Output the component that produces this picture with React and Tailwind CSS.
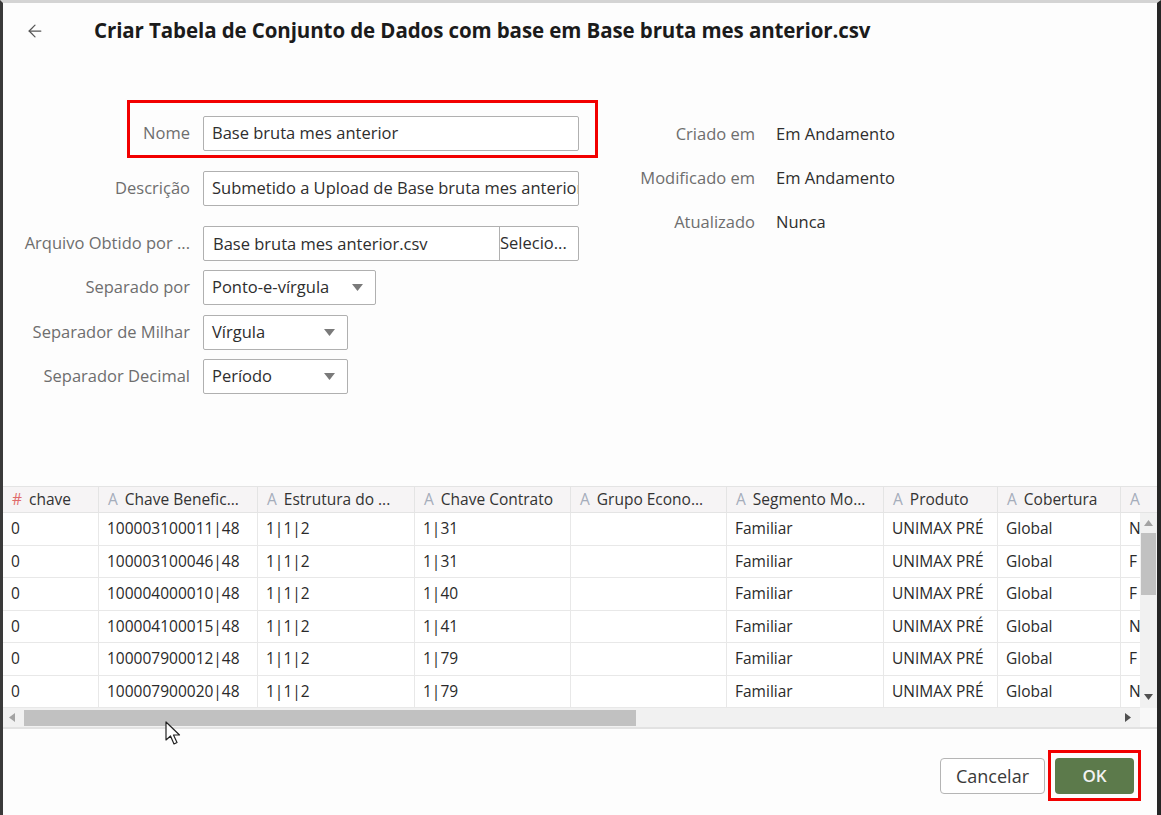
import { ArrowLeft } from 'lucide-react';

const columns = [
  { name: 'chave', type: '#', width: 96 },
  { name: 'Chave Benefic...', type: 'A', width: 159 },
  { name: 'Estrutura do ...', type: 'A', width: 157 },
  { name: 'Chave Contrato', type: 'A', width: 156 },
  { name: 'Grupo Econo...', type: 'A', width: 156 },
  { name: 'Segmento Mo...', type: 'A', width: 157 },
  { name: 'Produto', type: 'A', width: 114 },
  { name: 'Cobertura', type: 'A', width: 123 },
  { name: '', type: 'A', width: 60 },
];

const rows = [
  ['0', '100003100011|48', '1|1|2', '1|31', '', 'Familiar', 'UNIMAX PRÉ', 'Global', 'N'],
  ['0', '100003100046|48', '1|1|2', '1|31', '', 'Familiar', 'UNIMAX PRÉ', 'Global', 'F'],
  ['0', '100004000010|48', '1|1|2', '1|40', '', 'Familiar', 'UNIMAX PRÉ', 'Global', 'F'],
  ['0', '100004100015|48', '1|1|2', '1|41', '', 'Familiar', 'UNIMAX PRÉ', 'Global', 'N'],
  ['0', '100007900012|48', '1|1|2', '1|79', '', 'Familiar', 'UNIMAX PRÉ', 'Global', 'F'],
  ['0', '100007900020|48', '1|1|2', '1|79', '', 'Familiar', 'UNIMAX PRÉ', 'Global', 'N'],
];

function Caret() {
  return (
    <svg width="11" height="7" viewBox="0 0 11 7" className="shrink-0">
      <path d="M0 0 L11 0 L5.5 7 Z" fill="#7a7a7a" />
    </svg>
  );
}

function FormRow({ label, children, className = '' }) {
  return (
    <div className={`flex items-center ${className}`}>
      <div className="w-[187px] shrink-0 text-right text-[16.5px] whitespace-nowrap text-[#6e6e6e]">{label}</div>
      <div className="ml-[13px]">{children}</div>
    </div>
  );
}

function TextBox({ value, width = 'w-[376px]' }) {
  return (
    <div className={`${width} flex h-[35px] items-center overflow-hidden whitespace-nowrap rounded-[2px] border border-[#b0b0b0] bg-white px-[8px] text-[16.5px] text-[#2e2e2e]`}>
      {value}
    </div>
  );
}

function SelectBox({ value, width }) {
  return (
    <div className={`${width} flex h-[35px] items-center justify-between rounded-[2px] border border-[#b0b0b0] bg-white pl-[8px] pr-[12px] text-[16.5px] text-[#2e2e2e]`}>
      <span>{value}</span>
      <Caret />
    </div>
  );
}

function InfoRow({ label, value }) {
  return (
    <div className="flex h-[44px] items-center">
      <div className="w-[155px] text-right text-[16.5px] text-[#6e6e6e]">{label}</div>
      <div className="ml-[21px] text-[16.5px] text-[#2e2e2e]">{value}</div>
    </div>
  );
}

export default function App() {
  return (
    <div
      className="relative h-[815px] w-[1161px] overflow-hidden border-t-[3px] border-l-[3px] border-r-[4px] border-t-[#d4d4d4] border-l-[#3a3a3a] border-r-[#262626] bg-[#fdfdfd]"
      style={{ fontFamily: '"Open Sans", "Noto Sans", sans-serif' }}
    >
      {/* header */}
      <div className="flex h-[55px] items-center">
        <ArrowLeft className="ml-[22px] text-[#555]" size={20} strokeWidth={1.5} />
        <h1 className="ml-[49px] text-[20.5px] font-bold tracking-[-0.1px] whitespace-nowrap text-[#1b1b1b]">
          Criar Tabela de Conjunto de Dados com base em Base bruta mes anterior.csv
        </h1>
      </div>

      {/* form */}
      <div className="mt-[58px] flex h-[370px] items-start">
        <div className="flex w-[576px] flex-col">
          <FormRow label="Nome">
            <TextBox value="Base bruta mes anterior" />
          </FormRow>
          <FormRow label="Descrição" className="mt-[20px]">
            <TextBox value="Submetido a Upload de Base bruta mes anterior.csv" />
          </FormRow>
          <FormRow label="Arquivo Obtido por ..." className="mt-[20px]">
            <div className="flex h-[35px] w-[376px] items-stretch overflow-hidden rounded-[2px] border border-[#b0b0b0] bg-white text-[16.5px] text-[#2e2e2e]">
              <div className="flex flex-1 items-center px-[9px] pt-[1px] whitespace-nowrap">Base bruta mes anterior.csv</div>
              <div className="flex w-[79px] shrink-0 items-center border-l border-[#b0b0b0] whitespace-nowrap">Selecio...</div>
            </div>
          </FormRow>
          <FormRow label="Separado por" className="mt-[9px]">
            <SelectBox value="Ponto-e-vírgula" width="w-[173px]" />
          </FormRow>
          <FormRow label="Separador de Milhar" className="mt-[10px]">
            <SelectBox value="Vírgula" width="w-[145px]" />
          </FormRow>
          <FormRow label="Separador Decimal" className="mt-[9px]">
            <SelectBox value="Período" width="w-[145px]" />
          </FormRow>
        </div>
        <div className="ml-[21px] -mt-[4px] flex flex-col">
          <InfoRow label="Criado em" value="Em Andamento" />
          <InfoRow label="Modificado em" value="Em Andamento" />
          <InfoRow label="Atualizado" value="Nunca" />
        </div>
      </div>

      {/* annotation around Nome */}
      <div className="pointer-events-none absolute left-[124px] top-[97px] h-[58px] w-[471px] border-[3px] border-[#f20000]" />

      {/* data table */}
      <div className="border-b-2 border-[#e2e2e2]">
        <div className="flex h-[27px] overflow-hidden border-t border-b border-[#e4e4e4] bg-[#f6f4f5]">
          {columns.map((c, i) => (
            <div
              key={i}
              className="flex shrink-0 items-center gap-[7px] border-r border-[#e4e4e4] pl-[9px] text-[15.5px] whitespace-nowrap text-[#333]"
              style={{ width: c.width }}
            >
              <span className={c.type === '#' ? 'text-[#e06a6a]' : 'text-[#a5adbb]'}>{c.type}</span>
              {c.name && <span>{c.name}</span>}
            </div>
          ))}
        </div>
        <div className="flex">
          <div className="flex-1 overflow-hidden">
            {rows.map((r, ri) => (
              <div key={ri} className="flex h-[32.5px] border-b border-[#e8e8e8] bg-white">
                {r.map((v, ci) => (
                  <div
                    key={ci}
                    className="flex shrink-0 items-center border-r border-[#e8e8e8] pl-[8px] text-[15.5px] whitespace-nowrap text-[#2a2a2a]"
                    style={{ width: columns[ci].width }}
                  >
                    {v}
                  </div>
                ))}
              </div>
            ))}
          </div>
          <div className="flex w-[17px] shrink-0 flex-col items-center bg-[#f1f1f1]">
            <svg width="9" height="6" viewBox="0 0 9 6" className="mt-[7px]">
              <path d="M0 6 L9 6 L4.5 0 Z" fill="#a3a3a3" />
            </svg>
            <div className="mt-[7px] h-[62px] w-[15px] bg-[#c1c1c1]" />
            <div className="flex-1" />
            <svg width="9" height="6" viewBox="0 0 9 6" className="mb-[8px]">
              <path d="M0 0 L9 0 L4.5 6 Z" fill="#505050" />
            </svg>
          </div>
        </div>
        <div className="flex h-[19px]">
          <div className="flex flex-1 items-center bg-[#f1f1f1]">
            <svg width="6" height="9" viewBox="0 0 6 9" className="ml-[6px]">
              <path d="M6 0 L6 9 L0 4.5 Z" fill="#a3a3a3" />
            </svg>
            <div className="ml-[9px] h-[16px] w-[612px] bg-[#c1c1c1]" />
            <div className="flex-1" />
            <svg width="6" height="9" viewBox="0 0 6 9" className="mr-[9px]">
              <path d="M0 0 L0 9 L6 4.5 Z" fill="#505050" />
            </svg>
          </div>
          <div className="w-[17px] bg-[#f8f8f8]" />
        </div>
      </div>

      {/* footer */}
      <div className="flex justify-end gap-[3px] pt-[21px] pr-[16px]">
        <button
          type="button"
          className="mt-[8px] h-[36px] w-[105px] rounded-[4px] border border-[#b5b5b5] bg-white text-[18px] text-[#3a3a3a]"
        >
          Cancelar
        </button>
        <div className="border-[3px] border-[#f20000] px-[4px] pt-[5px] pb-[4px]">
          <button
            type="button"
            className="h-[36px] w-[79px] rounded-[4px] bg-[#5c7a4b] text-[17px] font-semibold text-[#f2f2f2]"
          >
            OK
          </button>
        </div>
      </div>

      {/* mouse pointer */}
      <svg
        width="18"
        height="25"
        viewBox="0 0 18 25"
        className="pointer-events-none absolute left-[162px] top-[718px]"
      >
        <path d="M1 1 L1 19 L5.5 15 L9 23 L12 21.5 L8.5 14 L14.5 14 Z" fill="#fff" stroke="#222" strokeWidth="1.2" strokeLinejoin="round" />
      </svg>
    </div>
  );
}
